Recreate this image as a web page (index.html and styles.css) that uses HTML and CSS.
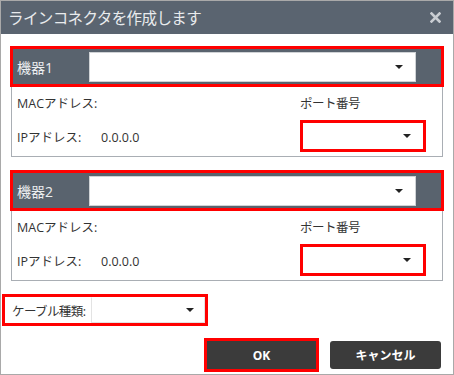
FILE: index.html
```html
<!DOCTYPE html>
<html lang="ja">
<head>
    <meta charset="UTF-8">
    <title>ラインコネクタを作成します</title>
    <link rel="stylesheet" href="styles.css">
</head>
<body>
    <div class="dialog">
        <div class="titlebar">
            <span class="title">ラインコネクタを作成します</span>
            <svg class="close" width="11" height="11" viewBox="0 0 11 11">
                <path d="M1.5 1.5L9.5 9.5M9.5 1.5L1.5 9.5" stroke="#c9cdd2" stroke-width="2.6" stroke-linecap="square"></path>
            </svg>
        </div>

        <div class="content">
            <!-- Device 1 -->
            <div class="device">
                <div class="device-head">
                    <span class="device-label">機器1</span>
                    <div class="combo"><span class="arrow"></span></div>
                </div>
                <div class="device-body">
                    <span class="field">MACアドレス:</span>
                    <span class="port-label">ポート番号</span>
                    <span class="field"><span class="field-name">IPアドレス:</span>0.0.0.0</span>
                    <div class="port-combo"><span class="arrow"></span></div>
                </div>
            </div>

            <!-- Device 2 -->
            <div class="device">
                <div class="device-head">
                    <span class="device-label">機器2</span>
                    <div class="combo"><span class="arrow"></span></div>
                </div>
                <div class="device-body">
                    <span class="field">MACアドレス:</span>
                    <span class="port-label">ポート番号</span>
                    <span class="field"><span class="field-name">IPアドレス:</span>0.0.0.0</span>
                    <div class="port-combo"><span class="arrow"></span></div>
                </div>
            </div>

            <div class="cable">
                <span class="cable-label">ケーブル種類:</span>
                <div class="cable-combo"><span class="arrow"></span></div>
            </div>

            <div class="buttons">
                <button class="btn btn-ok">OK</button>
                <button class="btn">キャンセル</button>
            </div>
        </div>
    </div>
</body>
</html>
```

FILE: styles.css
```css
* {
    margin: 0;
    padding: 0;
    box-sizing: border-box;
    font-family: "Open Sans", "Noto Sans CJK JP", sans-serif;
}

body {
    background-color: #ffffff;
}

.dialog {
    width: 454px;
    height: 375px;
    border: 1px solid #a9a9a9;
    background-color: #ffffff;
}

.titlebar {
    height: 33px;
    background-color: #5a6470;
    display: flex;
    align-items: center;
    justify-content: space-between;
    padding: 0 12px 0 7px;
}

.title {
    color: #e9ebed;
    font-size: 15.5px;
    letter-spacing: -0.6px;
}

.close {
    display: block;
}

.content {
    padding: 12px 9px 0 9px;
}

.device {
    margin-bottom: 13px;
}

.device-head {
    height: 41px;
    border: 3px solid #ff0000;
    background-color: #59636e;
    display: flex;
    align-items: center;
    padding: 1px 25px 0 4px;
}

.device-label {
    width: 72px;
    color: #eceef0;
    font-size: 14px;
}

.combo, .port-combo, .cable-combo {
    position: relative;
    background-color: #ffffff;
}

.combo {
    flex: 1;
    height: 30px;
    border: 1px solid #d0d3d6;
}

.arrow {
    position: absolute;
    top: 50%;
    right: 12px;
    margin-top: -2px;
    border-left: 4px solid transparent;
    border-right: 4px solid transparent;
    border-top: 4px solid #222222;
}

.device-body {
    margin: 0 1px;
    border: 1px solid #a9aeb4;
    border-top: none;
    display: grid;
    grid-template-columns: 1fr 126px;
    grid-template-rows: 30px 32px;
    row-gap: 3px;
    align-items: center;
    padding: 0 16px 4px 5px;
    color: #333333;
    font-size: 12.5px;
}

.field-name {
    display: inline-block;
    width: 84px;
}

.port-label {
    letter-spacing: -0.5px;
}

.port-combo {
    height: 32px;
    border: 3px solid #ff0000;
}

.cable {
    display: flex;
    align-items: center;
    width: 206px;
    height: 32px;
    margin-left: -8px;
    border: 3px solid #ff0000;
    padding-left: 7px;
}

.cable-label {
    width: 79px;
    color: #333333;
    font-size: 12.5px;
    letter-spacing: -0.6px;
}

.cable-combo {
    flex: 1;
    height: 26px;
    border: 1px solid #e3e3e3;
    border-top-color: #ffffff;
}

.cable-combo .arrow {
    right: 10px;
}

.buttons {
    display: flex;
    justify-content: flex-end;
    gap: 14px;
    margin-top: 15px;
    padding-right: 3px;
}

.btn {
    width: 111px;
    height: 28px;
    background-color: #3b3b3b;
    color: #ffffff;
    border: none;
    border-radius: 3px;
    font-size: 12px;
    font-weight: bold;
}

.btn-ok {
    width: 109px;
    border-radius: 0;
    box-shadow: 0 0 0 3px #ff0000;
}
```
